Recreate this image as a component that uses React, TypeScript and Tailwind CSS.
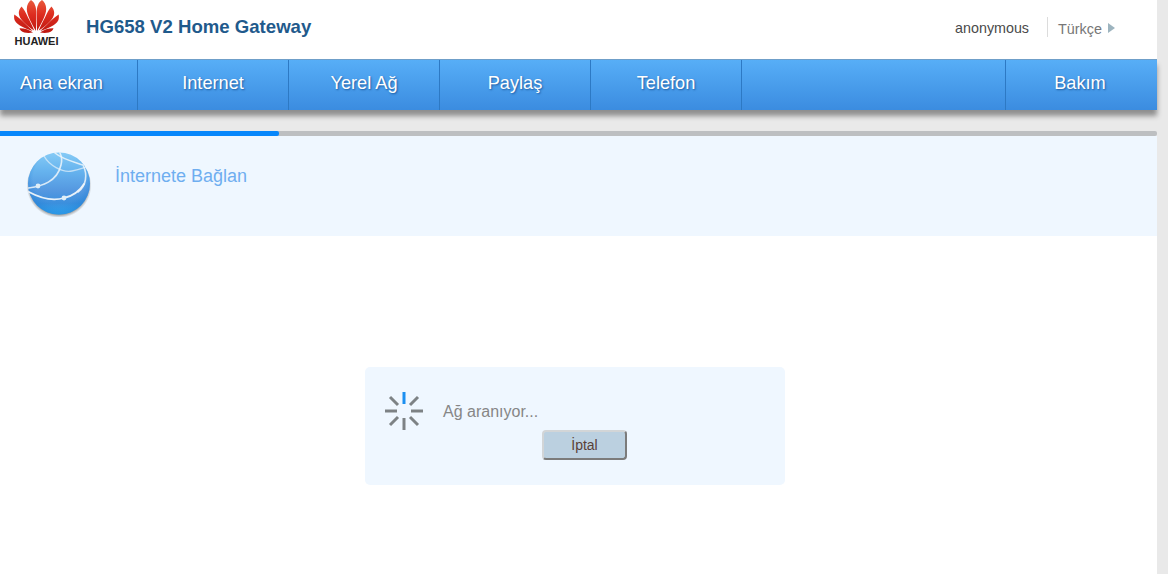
import React from 'react';

const navItems = [
  { label: 'Ana ekran', w: 'w-[138px] pr-[14px]' },
  { label: 'Internet', w: 'w-[151px]' },
  { label: 'Yerel Ağ', w: 'w-[151px]' },
  { label: 'Paylaş', w: 'w-[151px]' },
  { label: 'Telefon', w: 'w-[151px]' },
  { label: '', w: 'w-[264px]' },
];

const PetalHalf = () => (
  <>
    <path d="M21.9 31 C18 24 12.8 15 12.8 9 C12.8 5 14.8 1.5 17 0 C20.5 2 22.3 7 22.3 12 C22.3 19 22.2 25.5 21.9 31Z" />
    <path d="M20.2 30.5 C13 26 4.8 19 4.8 13 C4.8 10.5 5.8 8.2 7.6 6.5 C10 9 12 13 14 17.5 C16.5 22 19 27 20.2 30.5Z" />
    <path d="M18.6 31 C11 28.5 3.2 25 0.8 20.5 C0.1 19 -0.1 16.8 0.3 14.5 C3.5 16.5 7 19.5 10.5 23 C13.5 26 16.5 28.5 18.6 31Z" />
    <path d="M19 32.6 C14.5 33.2 9.5 33.2 7 30.8 C6.4 30.2 5.9 29.3 5.5 28.2 C10 28 15 29.5 19 32.6Z" />
  </>
);

const HuaweiMark = () => (
  <svg width="45" height="33" viewBox="0 0 45 33" className="block overflow-visible">
    <defs>
      <linearGradient id="petal" x1="0" y1="0" x2="0" y2="33" gradientUnits="userSpaceOnUse">
        <stop offset="0" stopColor="#e95a3c" />
        <stop offset="0.45" stopColor="#dd2c1f" />
        <stop offset="1" stopColor="#bd1710" />
      </linearGradient>
    </defs>
    <g fill="url(#petal)">
      <PetalHalf />
      <g transform="matrix(-1 0 0 1 45 0)">
        <PetalHalf />
      </g>
    </g>
  </svg>
);

const Globe = () => (
  <svg width="66" height="66" viewBox="0 0 66 66" className="block">
    <defs>
      <linearGradient id="globeFill" x1="0" y1="0" x2="0" y2="1">
        <stop offset="0" stopColor="#86cbf6" />
        <stop offset="0.3" stopColor="#66b3ee" />
        <stop offset="0.62" stopColor="#5497e0" />
        <stop offset="0.82" stopColor="#3b8fdd" />
        <stop offset="1" stopColor="#36b0f6" />
      </linearGradient>
      <radialGradient id="globeShadow" cx="0.5" cy="0.5" r="0.5">
        <stop offset="0.86" stopColor="#777" />
        <stop offset="1" stopColor="#999" stopOpacity="0" />
      </radialGradient>
      <radialGradient id="globeRim" cx="0.5" cy="0.42" r="0.58">
        <stop offset="0.72" stopColor="#1f7fd6" stopOpacity="0" />
        <stop offset="1" stopColor="#1f7fd6" stopOpacity="0.55" />
      </radialGradient>
    </defs>
    <circle cx="33" cy="34.5" r="32.5" fill="url(#globeShadow)" />
    <circle cx="33" cy="32.5" r="31" fill="url(#globeFill)" />
    <circle cx="33" cy="32.5" r="31" fill="url(#globeRim)" />
    <g fill="none" stroke="#f0f6fa" strokeLinecap="round">
      <path d="M2.5 37 C16 35 31 31 35 14 C36 10 36 6 34 2" strokeWidth="1.6" strokeOpacity="0.85" />
      <path d="M18 5 C23 14 36 22 46 20 C52 19 57 17 60 16" strokeWidth="1.4" strokeOpacity="0.65" />
      <path d="M29 2 C36 8 48 11 57 14 C62 24 60 35 52 41" strokeWidth="1.6" strokeOpacity="0.85" />
      <path d="M3 41 C14 47 27 50 38 47 C47 45 53 41 58 33" strokeWidth="1.8" strokeOpacity="0.95" />
    </g>
    <circle cx="12" cy="35" r="2.4" fill="#dfeef8" />
    <circle cx="38" cy="47" r="2.4" fill="#dfeef8" />
  </svg>
);

const Spinner = () => (
  <svg width="40" height="40" viewBox="0 0 40 40" className="block">
    <g stroke="#7d8285" strokeWidth="3">
      <path d="M1 20 H13" />
      <path d="M27 20 H39" />
      <path d="M20 27 V39" />
      <path d="M6 6 L14 14" />
      <path d="M34 6 L26 14" />
      <path d="M6 34 L14 26" />
      <path d="M34 34 L26 26" />
    </g>
    <path d="M20 1 V13" stroke="#1b8ff0" strokeWidth="3" />
  </svg>
);

export default function App() {
  return (
    <div className="flex h-[574px] w-[1168px] overflow-hidden bg-[#e9e9e9] font-['Liberation_Sans',Arial,sans-serif]">
      <div className="w-[1157px] shrink-0">
        {/* Top header */}
        <div className="flex h-[59px] items-start bg-white">
          <div className="ml-[14px] flex w-[45px] flex-col items-center">
            <HuaweiMark />
            <span className="mt-[3px] text-[11px] font-bold leading-[10px] text-[#222]">HUAWEI</span>
          </div>
          <h1 className="ml-[27px] mt-[16px] text-[18.6px] font-bold leading-[21px] text-[#1f5a8c]">HG658 V2 Home Gateway</h1>
          <span className="ml-auto mt-[20px] text-[14.3px] leading-[16px] text-[#4a4a4a]">anonymous</span>
          <div className="ml-[18px] mt-[17px] h-[20px] w-px bg-[#dcdcdc]" />
          <span className="ml-[10px] mt-[21px] text-[14.4px] leading-[16px] text-[#777]">Türkçe</span>
          <div className="ml-[6px] mr-[42px] mt-[23px] h-0 w-0 border-y-[5px] border-l-[7px] border-y-transparent border-l-[#9db4bf]" />
        </div>

        {/* Nav bar */}
        <div className="flex h-[51px] border-t border-[#6f9fc9] bg-gradient-to-b from-[#57aef7] to-[#3b8ce0] shadow-[0_6px_5px_0_#8f8f8f]">
          {navItems.map((item, i) => (
            <div
              key={i}
              className={`flex items-center justify-center border-r border-[#2d79c4] pb-[2px] text-[18.2px] text-white [text-shadow:1px_1px_2px_rgba(0,50,110,0.6)] ${item.w}`}
            >
              {item.label}
            </div>
          ))}
          <div className="flex flex-1 items-center justify-center pb-[2px] pr-[3px] text-[18.2px] text-white [text-shadow:1px_1px_2px_rgba(0,50,110,0.6)]">Bakım</div>
        </div>

        {/* Progress */}
        <div className="mt-[21px] h-[5px] rounded-r-[2px] bg-[#bdbfc1]">
          <div className="h-[5px] w-[279px] rounded-r-[2px] bg-[#0787fb]" />
        </div>

        {/* Title band */}
        <div className="flex h-[100px] bg-[#eff7ff]">
          <div className="ml-[26px] mt-[15px]"><Globe /></div>
          <span className="ml-[23px] mt-[30px] text-[18px] leading-[20px] text-[#6eaef0]">İnternete Bağlan</span>
        </div>

        {/* Content */}
        <div className="h-[338px] bg-white pl-[365px] pt-[131px]">
          <div className="h-[118px] w-[420px] rounded-[5px] bg-[#eff7ff]">
            <div className="flex pl-[19px] pt-[24px]">
              <Spinner />
              <span className="ml-[19px] mt-[12px] text-[16px] leading-[18px] text-[#868686]">Ağ aranıyor...</span>
            </div>
            <button className="ml-[177px] mt-[-1px] flex h-[30px] w-[85px] items-center justify-center rounded-[4px] border-2 border-[#d2d5d7] border-b-[#7b7b7b] border-r-[#7b7b7b] bg-[#bbd0e0] text-[14px] text-[#5a4038]">
              İptal
            </button>
          </div>
        </div>
      </div>
    </div>
  );
}
